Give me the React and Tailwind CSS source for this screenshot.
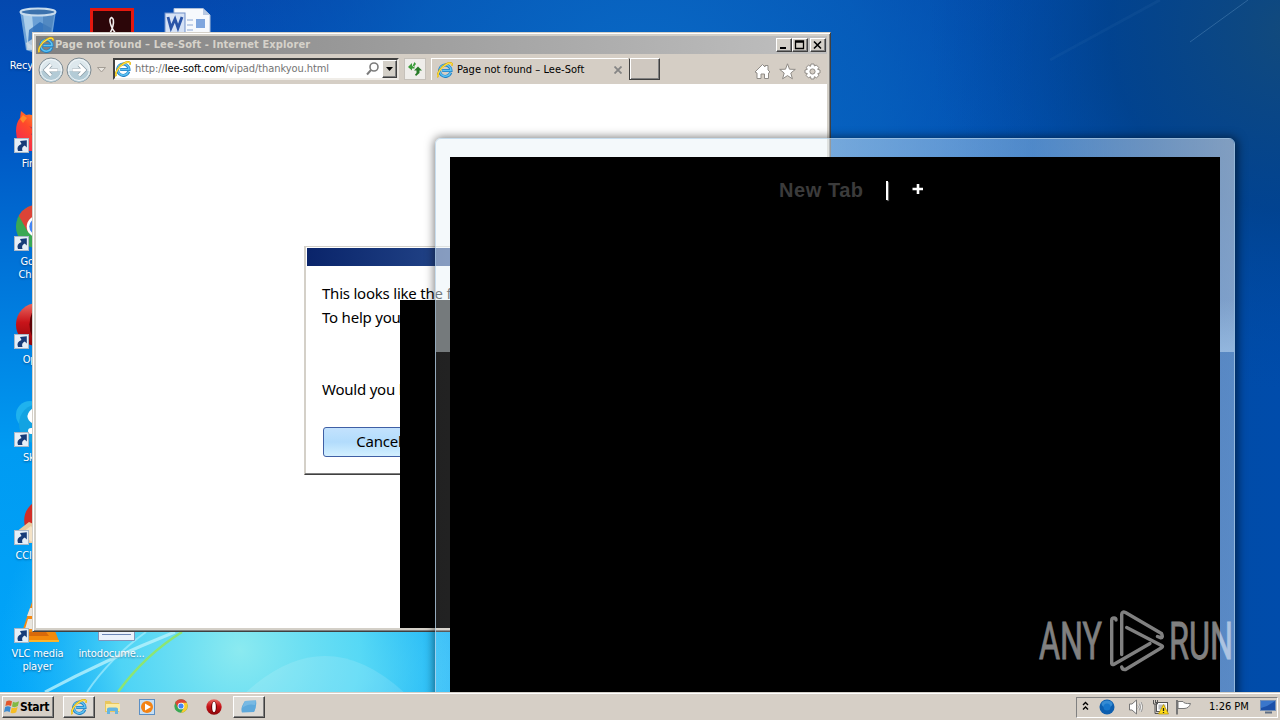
import React from 'react';
import clsx from 'clsx';

const UI = 'font-[Tahoma,"DejaVu_Sans_Condensed","DejaVu_Sans",sans-serif]';

function IEIcon({ size = 16 }) {
  return (
    <svg width={size} height={size} viewBox="0 0 16 16" className="shrink-0">
      <path d="M13.7 10.6A5.7 5.7 0 1 1 14 8.6H5.2" fill="none" stroke="#1f7fc4" strokeWidth="3" />
      <path d="M13.6 10.6A5.7 5.7 0 1 1 14 8.6H5.4" fill="none" stroke="#5ec3f2" strokeWidth="1.5" />
      <path d="M1.2 15.2C-.6 12 3.6 5.2 9.2 2.2 12.6.4 15.6.4 15 3.6" fill="none" stroke="#d9a800" strokeWidth="1.9" />
      <path d="M1.2 15C-.4 12 3.8 5.4 9.2 2.4 12.6.6 15.4.6 15 3.4" fill="none" stroke="#ffe14a" strokeWidth="1.1" />
    </svg>
  );
}

function ChromeIcon({ size }) {
  return (
    <svg width={size} height={size} viewBox="0 0 48 48">
      <circle cx="24" cy="24" r="23" fill="#3aa853" />
      <path d="M4 12.5A23 23 0 0 1 44 12.5L34 19 14 30Z" fill="#dc4437" />
      <path d="M24 13H44A23 23 0 0 1 24 47L34 30Z" fill="#fbcb2d" />
      <circle cx="24" cy="24" r="11.5" fill="#fff" />
      <circle cx="24" cy="24" r="8.8" fill="#4285f4" />
    </svg>
  );
}

function OperaIcon({ size }) {
  return (
    <svg width={size} height={size} viewBox="0 0 48 48">
      <defs>
        <linearGradient id="opera" x1="0" y1="0" x2="0" y2="1">
          <stop offset="0" stopColor="#e96a62" />
          <stop offset=".45" stopColor="#c8141a" />
          <stop offset="1" stopColor="#8d0509" />
        </linearGradient>
      </defs>
      <ellipse cx="24" cy="24" rx="23" ry="23" fill="url(#opera)" />
      <ellipse cx="24" cy="24" rx="8.5" ry="17" fill="#5d0205" />
      <ellipse cx="24" cy="24" rx="5.5" ry="15.5" fill="#fff" />
    </svg>
  );
}

function BinIcon() {
  return (
    <svg width="48" height="48" viewBox="0 0 48 48">
      <path d="M6 5 12 44Q24 49 36 44L42 5Z" fill="#86b5de" fillOpacity=".8" />
      <path d="M9 8 14 42 21 44 18 8Z" fill="#bcd9ef" fillOpacity=".8" />
      <path d="M15 24 26 16 37 22 35 38 22 42 14 37Z" fill="#2a6cb8" fillOpacity=".8" />
      <path d="M29 9H40L35 42H29Z" fill="#477fb9" fillOpacity=".7" />
      <path d="M12 37 20 32 26 44 13 44Z" fill="#cfdbe4" fillOpacity=".8" />
      <ellipse cx="24" cy="6" rx="17.5" ry="3.5" fill="#3c72ad" stroke="#c8dced" strokeWidth="2" />
    </svg>
  );
}

function FirefoxIcon() {
  return (
    <svg width="48" height="48" viewBox="0 0 48 48">
      <defs>
        <linearGradient id="fox" x1="0" y1="1" x2="1" y2="0">
          <stop offset="0" stopColor="#f01d5d" />
          <stop offset=".45" stopColor="#ff4a2a" />
          <stop offset="1" stopColor="#ffc928" />
        </linearGradient>
      </defs>
      <path d="M7 7 12 11Q15 10 18 11L21 8 46 18V38L30 47H12Q2 40 2 27 2 19 6 14Z" fill="url(#fox)" />
      <path d="M15 22Q20 26 26 22L30 30Q22 36 17 30L22 28Z" fill="#7d2b66" />
      <path d="M6 15 9 11 13 14 9 19Z" fill="#ff8b2a" />
    </svg>
  );
}

function SkypeIcon() {
  return (
    <svg width="48" height="48" viewBox="0 0 48 48">
      <circle cx="16" cy="17" r="14" fill="#1fb2ee" />
      <circle cx="25" cy="26" r="20" fill="#13a3e2" />
      <path d="M34 15Q23 9 18 15T25 25 32 31 17 33" fill="none" stroke="#fff" strokeWidth="6" strokeLinecap="round" />
    </svg>
  );
}

function CCleanerIcon() {
  return (
    <svg width="48" height="48" viewBox="0 0 48 48">
      <path d="M42 11A17 17 0 1 0 42 38" fill="none" stroke="#d12d27" strokeWidth="9" />
      <circle cx="29" cy="24" r="10" fill="#78b7dc" />
      <path d="M2 36 15 26 24 30 33 47H7Z" fill="#e9c99d" />
      <path d="M9 36 17 30 23 40 17 46Z" fill="#f4e2c6" />
    </svg>
  );
}

function VlcIcon() {
  return (
    <svg width="48" height="48" viewBox="0 0 48 48">
      <path d="M20 2H28L40 38H8Z" fill="#f58a12" />
      <path d="M16 14H32L34 22H13ZM14 25H37L39 35H11Z" fill="#e9e6df" />
      <path d="M6 37H41L45 47H2Z" fill="#f38a0b" />
      <path d="M2 46H45V48H2Z" fill="#ffb429" />
      <path d="M15 38H32L35 42H12Z" fill="#d8690a" />
    </svg>
  );
}

function AdobeIcon() {
  return (
    <svg width="48" height="48" viewBox="0 0 48 48">
      <rect x="2" y="2" width="44" height="44" fill="#e4180f" />
      <rect x="5" y="5" width="38" height="38" fill="#2c0609" />
      <path d="M17 33C26 25 27 13 23.500 11.500 20 13 23 25 32 31" fill="none" stroke="#f2eeee" strokeWidth="1.6" />
    </svg>
  );
}

function WordIcon() {
  return (
    <svg width="48" height="48" viewBox="0 0 48 48">
      <path d="M11 2.500H40L47 9V47H11Z" fill="#f6f9fd" stroke="#aebfd8" />
      <path d="M40 2.500V9H47Z" fill="#b7c8e2" />
      <path d="M24 14H30M24 19H30M24 24H30" stroke="#8da8d4" />
      <rect x="33" y="13" width="9" height="9" fill="#7fa6de" />
      <rect x="2" y="7" width="20" height="20" fill="#d6e2f5" stroke="#6f8fc9" />
      <path d="M5 11 8 22 12 13 15 22 19 11" fill="none" stroke="#2b55a8" strokeWidth="2.800" />
    </svg>
  );
}

function TextDocIcon() {
  return (
    <svg width="48" height="48" viewBox="0 0 48 48">
      <path d="M10.500 2H46.500V46.500H10.500Z" fill="#eaf1fb" stroke="#7f95bb" />
      <path d="M14 40.500H43" stroke="#6b86b6" />
    </svg>
  );
}

function ShortcutArrow() {
  return (
    <svg width="15" height="15" viewBox="0 0 15 15" className="absolute -bottom-px left-0">
      <rect x=".5" y=".5" width="14" height="14" fill="#e6eff7" stroke="#a9b8c8" />
      <path d="M4 13Q2 8 7.500 6L6 3 12.800 2.200 12.800 9.500 10.800 7.500Q7 9 8.500 13Z" fill="#173c78" />
    </svg>
  );
}

const LEFT_ICONS = [
  { label: ['Recycle Bin'], Icon: BinIcon },
  { label: ['Firefox'], Icon: FirefoxIcon, shortcut: true },
  { label: ['Google', 'Chrome'], Icon: ChromeIcon, shortcut: true },
  { label: ['Opera'], Icon: OperaIcon, shortcut: true },
  { label: ['Skype'], Icon: SkypeIcon, shortcut: true },
  { label: ['CCleaner'], Icon: CCleanerIcon, shortcut: true },
  { label: ['VLC media', 'player'], Icon: VlcIcon, shortcut: true },
];

function DesktopIcon({ label, Icon, shortcut }) {
  return (
    <div className="flex h-[98px] w-[75px] shrink-0 flex-col items-center">
      <div className="relative flex h-12 w-12 items-center justify-center">
        <Icon size={45} />
        {shortcut && <ShortcutArrow />}
      </div>
      <div className="mt-[5px] text-center text-[11px] leading-[13px] tracking-[-0.15px] whitespace-nowrap text-white [text-shadow:0_1px_2px_rgba(0,20,60,.5)]">
        {label.map((line) => <div key={line}>{line}</div>)}
      </div>
    </div>
  );
}

function Wallpaper() {
  return (
    <svg width="1280" height="692" viewBox="0 0 1280 692" className="absolute inset-0">
      <defs>
        <linearGradient id="sky" x1="0" y1="0" x2="0" y2="1">
          <stop offset="0" stopColor="#0448ae" />
          <stop offset=".2" stopColor="#0058c4" />
          <stop offset=".45" stopColor="#007ddf" />
          <stop offset=".65" stopColor="#009bf2" />
          <stop offset="1" stopColor="#02a6fa" />
        </linearGradient>
        <linearGradient id="right" x1="0" y1="0" x2="1" y2="0">
          <stop offset=".55" stopColor="#0051b2" stopOpacity="0" />
          <stop offset=".9" stopColor="#004ba4" />
          <stop offset="1" stopColor="#004cab" />
        </linearGradient>
        <radialGradient id="top" gradientUnits="userSpaceOnUse" cx="640" cy="120" r="480">
          <stop offset="0" stopColor="#0a6cc8" />
          <stop offset=".5" stopColor="#0761bd" stopOpacity=".75" />
          <stop offset="1" stopColor="#0450b0" stopOpacity="0" />
        </radialGradient>
        <radialGradient id="corner" gradientUnits="userSpaceOnUse" cx="1290" cy="30" r="360">
          <stop offset="0" stopColor="#124a7c" />
          <stop offset=".5" stopColor="#024088" stopOpacity=".75" />
          <stop offset="1" stopColor="#0048a0" stopOpacity="0" />
        </radialGradient>
        <radialGradient id="glow" gradientUnits="userSpaceOnUse" cx="240" cy="650" r="240">
          <stop offset="0" stopColor="#8beaf0" />
          <stop offset=".5" stopColor="#5cdcf5" stopOpacity=".85" />
          <stop offset="1" stopColor="#25baf7" stopOpacity="0" />
        </radialGradient>
        <radialGradient id="glow2" gradientUnits="userSpaceOnUse" cx="370" cy="680" r="180">
          <stop offset="0" stopColor="#46cdf6" />
          <stop offset="1" stopColor="#30c0f5" stopOpacity="0" />
        </radialGradient>
      </defs>
      <rect width="1280" height="692" fill="url(#sky)" />
      <rect width="1280" height="692" fill="url(#right)" />
      <rect width="1280" height="692" fill="url(#top)" />
      <rect width="1280" height="692" fill="url(#corner)" />
      <rect width="600" height="692" fill="url(#glow2)" />
      <rect width="600" height="692" fill="url(#glow)" />
      <path d="M238 700Q325 612 412 700Z" fill="#fff" fillOpacity=".13" />
      <path d="M45 692Q105 660 175 632" fill="none" stroke="#b9f2fd" strokeOpacity=".8" strokeWidth="3" />
      <path d="M87 692Q110 658 146 632" fill="none" stroke="#a4ecfd" strokeOpacity=".7" strokeWidth="2" />
      <path d="M118 692Q145 655 182 632" fill="none" stroke="#8de572" strokeWidth="2.500" />
      <path d="M1190 42 1248 0" stroke="#4f86b8" strokeOpacity=".5" />
      <path d="M1050 60 1160 0" stroke="#3f78b8" strokeOpacity=".12" strokeWidth="3" />
    </svg>
  );
}

function CaptionButton({ children, className }) {
  return (
    <div className={clsx('flex h-[14px] w-4 items-center justify-center border border-t-white border-l-white border-r-[#404040] border-b-[#404040] bg-[#d4d0c8] shadow-[inset_-1px_-1px_0_#808080]', className)}>
      <svg width="12" height="10" viewBox="0 0 12 10">{children}</svg>
    </div>
  );
}

function TitleBar() {
  return (
    <div className="flex h-[18px] items-center bg-linear-to-r from-[#808080] to-[#c0c0c0] pr-px pl-[2px]">
      <IEIcon size={16} />
      <span className="ml-px flex-1 text-[11px] font-bold tracking-[0.1px] whitespace-nowrap text-[#d6d2ca]">Page not found – Lee-Soft - Internet Explorer</span>
      <CaptionButton><path d="M2 8H8" stroke="#000" strokeWidth="2" /></CaptionButton>
      <CaptionButton><path d="M1.500 1H9.500V8.500H1.500ZM1.500 2H9.500" fill="none" stroke="#000" strokeWidth="1.300" /></CaptionButton>
      <CaptionButton className="ml-[2px]"><path d="M2 1.500 9 8.500M9 1.500 2 8.500" stroke="#000" strokeWidth="1.600" /></CaptionButton>
    </div>
  );
}

function NavButton({ flip }) {
  return (
    <svg width="28" height="26" viewBox="0 0 28 26" className={clsx('shrink-0', flip && '-scale-x-100')}>
      <circle cx="14" cy="13" r="12" fill="#dde8ed" stroke="#7f8b92" />
      <path d="M3 14A11 11 0 0 0 25 14Z" fill="#b3cbd6" />
      <circle cx="14" cy="13" r="10.500" fill="none" stroke="#f2f7f9" />
      <path d="M14 7.500 8.500 13 14 18.500M9 13H20.500" fill="none" stroke="#8b9ca6" strokeWidth="4.200" />
      <path d="M14 7.500 8.500 13 14 18.500M9 13H20.500" fill="none" stroke="#fff" strokeWidth="2.800" />
    </svg>
  );
}

function Toolbar() {
  return (
    <div className="flex h-[30px] items-start bg-[#d5cec5] pt-[4px] pl-[1px] text-[11px]">
      <div className="-mt-px flex h-[26px]">
        <NavButton />
        <NavButton flip />
      </div>
      <svg width="20" height="22" viewBox="0 0 20 22" className="shrink-0">
        <path d="M4.500 9.500H12.500L8.500 14Z" fill="#e9e5df" stroke="#a39d95" />
      </svg>
      <div className="flex h-[22px] w-[286px] shrink-0 items-center border-2 border-t-[#404040] border-l-[#404040] border-r-[#e8e4de] border-b-[#f0ede8] bg-white">
        <IEIcon size={16} />
        <span className="ml-1 flex-1 pt-px tracking-[-0.08px] whitespace-nowrap text-[#747474]">
          http://<span className="text-black">lee-soft.com</span>/vipad/thankyou.html
        </span>
        <svg width="18" height="16" viewBox="0 0 18 16">
          <circle cx="10" cy="6" r="4" fill="none" stroke="#7c7c7c" strokeWidth="1.600" />
          <path d="M7 9 3 13.500" stroke="#7c7c7c" strokeWidth="2" />
        </svg>
        <div className="flex h-[18px] w-[15px] items-center justify-center border border-t-white border-l-white border-r-[#404040] border-b-[#404040] bg-[#d4d0c8] shadow-[inset_-1px_-1px_0_#808080]">
          <svg width="7" height="4"><path d="M0 0H7L3.500 4Z" /></svg>
        </div>
      </div>
      <div className="ml-[5px] flex h-[22px] w-[22px] shrink-0 items-center justify-center border border-[#c6c1ba] bg-[#efedea]">
        <svg width="16" height="16" viewBox="0 0 16 16">
          <path d="M5 2 1 6 5 9.500V7.500H7.500V5H5ZM7.500 1 9 3 6.500 6 5.500 5Z" fill="#3a9b38" />
          <path d="M11 5.500 15 9.500H12.500V12L9 15 8 13.500 9.500 12V9.500H7Z" fill="#267a27" />
        </svg>
      </div>
      <div className="ml-[5px] flex h-[22px] w-[197px] shrink-0 items-center border-t border-l border-white pt-px pl-[5px]">
        <IEIcon size={16} />
        <span className="ml-[4px] flex-1 tracking-[0.03px] whitespace-nowrap text-black">Page not found – Lee-Soft</span>
        <svg width="8" height="8" viewBox="0 0 8 8" className="mr-[6px]">
          <path d="M.5 .5 7.500 7.500M7.500 .5 .5 7.500" stroke="#858585" strokeWidth="1.800" />
        </svg>
      </div>
      <div className="ml-px h-[22px] w-[31px] shrink-0 border border-t-white border-l-[#404040] border-r-[#404040] border-b-[#404040] bg-[#cfc8c0] shadow-[inset_1px_0_0_#fff,inset_-1px_-1px_0_#808080]" />
      <div className="mt-[5px] mr-[6px] ml-auto flex gap-[8px]">
        <svg width="17" height="17" viewBox="0 0 17 17">
          <path d="M1 9 8.500 1.500 11 4V2.500H14V7L16 9 14.500 10V15.500H10.500V11H7V15.500H3V10Z" fill="#fff" stroke="#8f8b86" />
        </svg>
        <svg width="17" height="17" viewBox="0 0 17 17">
          <path d="M8.500 .8 10.500 6.200 16.300 6.400 11.800 10 13.400 15.800 8.500 12.600 3.600 15.800 5.200 10 .7 6.400 6.500 6.200Z" fill="#fff" stroke="#8f8b86" />
        </svg>
        <svg width="17" height="17" viewBox="0 0 17 17">
          <path d="M7 1H10L10.400 3 12.300 2 14.800 4.500 13.700 6.400 16 7V10L13.800 10.500 14.900 12.500 12.500 14.800 10.400 13.700 10 16H7L6.500 13.700 4.500 14.900 2.200 12.500 3.300 10.500 1 10V7L3.300 6.400 2.200 4.400 4.500 2.200 6.500 3.300Z" fill="#fff" stroke="#8f8b86" />
          <circle cx="8.500" cy="8.500" r="2.600" fill="#d5cec5" stroke="#8f8b86" />
        </svg>
      </div>
    </div>
  );
}

function FirstRunDialog() {
  return (
    <div className="absolute top-[162px] left-[268px] h-[229px] w-[420px] border border-t-[#d4d0c8] border-l-[#d4d0c8] border-r-[#404040] border-b-[#404040] bg-white p-px font-[Tahoma,'Noto_Sans',sans-serif] text-[15px] tracking-[-0.22px] text-black shadow-[inset_0_-1px_0_#808080,inset_1px_0_0_#d4d0c8]">
      <div className="ml-px h-[18px] bg-linear-to-r from-[#0a246a] to-[#5a84c4]" />
      <div className="flex flex-col pt-[15px] pl-4 leading-6 whitespace-nowrap">
        <div>This looks like the first time</div>
        <div>To help you get started</div>
        <div className="mt-12">Would you like to continue?</div>
        <div className="mt-[26px] ml-px flex h-[30px] w-[112px] items-center justify-center rounded-[3px] border border-[#3f5fa5] bg-linear-to-b from-[#c3e2fd] via-[#b2dcfc] via-50% to-[#d3f0ff] pb-[2px]">Cancel</div>
      </div>
    </div>
  );
}

function BrowserWindow() {
  return (
    <div className="absolute top-[32px] left-[32px] flex h-[600px] w-[799px] flex-col border border-t-[#d4d0c8] border-l-[#d4d0c8] border-r-[#404040] border-b-[#404040] bg-[#d4d0c8] p-[3px] shadow-[inset_1px_1px_0_#fff,inset_-1px_-1px_0_#808080]">
      <TitleBar />
      <Toolbar />
      <div className="relative flex-1 overflow-hidden bg-white">
        <FirstRunDialog />
        <div className="absolute top-[216px] right-[4px] bottom-0 left-[364px] bg-black" />
      </div>
    </div>
  );
}

// translucent Aero frame: lighter reflection in the upper part, darker tint below
function GlassWindow() {
  return (
    <div className="absolute top-[138px] left-[435px] h-[600px] w-[800px] overflow-hidden rounded-[6px] border border-[#b9d4ea]/80 shadow-[1px_1px_10px_2px_rgba(0,0,0,.5)]">
      <div className="flex h-full flex-col">
        <div className="flex h-[213px]">
          <div className="w-[395px] bg-[#eaf3f8]/50" />
          <div className="flex-1 bg-linear-to-r from-[#e4f0f8]/50 via-[#9cc4ea]/50 to-[#d4dae4]/60" />
        </div>
        <div className="flex-1 bg-linear-to-r from-white/13 to-[#dfe6f0]/40" />
      </div>
      <div className="absolute top-[160px] right-0 h-[53px] w-[14px] bg-linear-to-b from-[#a8cdf0]/0 to-[#a8cdf0]/50" />
      <div className="absolute top-[18px] right-[14px] bottom-0 left-[14px] bg-black">
        <div className="flex items-center pt-[19px] pl-[329px] font-['Liberation_Sans',Arial,sans-serif] text-[20px] leading-7 font-bold">
          <span className="w-[107px] tracking-[0.55px] whitespace-nowrap text-[#3b3b3b]">New Tab</span>
          <span className="h-[19px] w-[2px] bg-white shadow-[1px_1px_1px_#666]" />
          <svg width="12" height="12" viewBox="0 0 12 12" className="ml-[24px]">
            <path d="M6 0V10M.5 5H11" stroke="#fff" strokeWidth="2.600" />
          </svg>
        </div>
      </div>
    </div>
  );
}

function Watermark() {
  return (
    <svg width="220" height="70" viewBox="0 0 220 70" className="absolute top-[606px] left-[1035px] overflow-visible opacity-50">
      <g fill="#fff" stroke="#fff" strokeWidth=".8" fontFamily="Roboto, sans-serif" fontSize="52">
        <text x="4" y="53" textLength="63" lengthAdjust="spacingAndGlyphs">ANY</text>
        <text x="134" y="53" textLength="64" lengthAdjust="spacingAndGlyphs">RUN</text>
      </g>
      <g fill="none" stroke="#fff" strokeWidth="3.400" strokeLinejoin="round" strokeLinecap="round">
        <path d="M81 14Q81 12 79 12 76.700 12 76.700 14.500V57.500Q77 59.500 79.500 58L115 37.500" />
        <path d="M86.700 48.500V8.500Q87 5 90.500 6.500L126.500 27.500Q128.500 32 125.500 31.700L122.500 30.500" />
        <path d="M91.700 21.500 126.500 39.500Q128.500 40.500 126.500 41.700L90.500 63.500Q87.500 64 86.700 61" />
        <path d="M91.700 21.500V51" strokeWidth=".01" />
      </g>
    </svg>
  );
}

function TaskButton({ children, className }) {
  return (
    <div className={clsx('flex h-[22px] shrink-0 items-center justify-center border border-t-white border-l-white border-r-[#404040] border-b-[#404040] shadow-[inset_-1px_-1px_0_#808080]', className)}>
      {children}
    </div>
  );
}

function Tray() {
  return (
    <div className="mr-[2px] ml-auto flex h-[21px] w-[202px] items-center border border-t-[#808080] border-l-[#808080] border-r-white border-b-white text-[11px] text-black">
      <svg width="7" height="10" viewBox="0 0 7 10" className="mb-[3px] ml-[5px]">
        <path d="M1 4 3.500 1.500 6 4M1 8.500 3.500 6 6 8.500" fill="none" stroke="#000" strokeWidth="1.400" />
      </svg>
      <svg width="16" height="16" viewBox="0 0 16 16" className="ml-[10px]">
        <circle cx="8" cy="8" r="7.500" fill="#0d5eae" />
        <ellipse cx="8" cy="5" rx="5.500" ry="3.500" fill="#358bd3" />
        <circle cx="8" cy="8" r="3.500" fill="#1776cb" />
      </svg>
      <svg width="17" height="16" viewBox="0 0 17 16" className="ml-[13px]">
        <path d="M1.500 5H4L8.500 1V15L4 11H1.500Z" fill="#fff" stroke="#777" />
        <path d="M10.500 5.500Q12 8 10.500 10.500M12.500 3.500Q15 8 12.500 12.500" fill="none" stroke="#888" strokeWidth="2.200" />
        <path d="M10.500 5.500Q12 8 10.500 10.500M12.500 3.500Q15 8 12.500 12.500" fill="none" stroke="#fff" />
      </svg>
      <svg width="17" height="16" viewBox="0 0 17 16" className="ml-[7px]">
        <rect x="4.500" y="3.500" width="11" height="9" fill="#fff" stroke="#555" />
        <rect x="6.500" y="5.500" width="7" height="5" fill="#b9bcc0" />
        <path d="M1.500 1V5H3V14.500H8M5.500 1V5H3M3.500 1V4" fill="none" stroke="#555" />
        <path d="M11.500 5.500 16.500 15H6.500Z" fill="#ffdc16" stroke="#b08e00" strokeWidth=".7" />
        <path d="M11.500 9V12M11.500 13V14" stroke="#222" strokeWidth="1.300" />
      </svg>
      <svg width="17" height="16" viewBox="0 0 17 16" className="ml-[6px]">
        <path d="M2 1V15.500" stroke="#777" strokeWidth="2" />
        <path d="M3 2.500H8Q9 5 15.500 4.500 14 9.500 9 9.500H3Z" fill="#fff" stroke="#777" />
      </svg>
      <span className="ml-[17px] pt-px whitespace-nowrap">1:26 PM</span>
      <svg width="16" height="14" viewBox="0 0 16 14" className="mr-[1px] ml-auto">
        <rect x=".5" y=".5" width="15" height="10" fill="#1b50a9" stroke="#7590b7" />
        <path d="M1 1H15L7 6 1 8Z" fill="#3a76cb" />
        <path d="M5 12.500H12" stroke="#5f6e84" strokeWidth="2" />
      </svg>
    </div>
  );
}

function Taskbar() {
  return (
    <div className="flex h-7 items-center border-t border-[#d4d0c8] bg-[#d6cfc6] pt-px pl-[2px] shadow-[inset_0_1px_0_#fff]">
      <TaskButton className="w-[52px] pr-[3px]">
        <svg width="16" height="16" viewBox="0 0 17 16" className="shrink-0">
          <path d="M2.500 2Q5.500 0 8.500 2L7.500 7Q4.500 5.500 1.500 7Z" fill="#e2562b" />
          <path d="M9.500 2.500Q12.500 4 16 2L14.700 7Q11.500 9 8.500 7.500Z" fill="#82b944" />
          <path d="M1.200 8Q4 6.500 7.200 8L6 13.500Q3.500 11.500 0 13.500Z" fill="#3b8ad0" />
          <path d="M8.200 8.500Q11 10 14.500 8L13 13.500Q10 15.500 7 14Z" fill="#f6bd24" />
        </svg>
        <span className="text-[12px] font-bold tracking-[-0.35px] text-black">Start</span>
      </TaskButton>
      <TaskButton className="ml-[9px] w-8 bg-[#dedad4]"><IEIcon size={16} /></TaskButton>
      <div className="flex w-[137px] justify-around pr-px">
        <svg width="17" height="16" viewBox="0 0 17 16">
          <path d="M1 2H6L8 4H15V13H1Z" fill="#e8c65d" />
          <path d="M2 5H16V12H2Z" fill="#fbeaa1" />
          <path d="M3 15V10Q3 8.500 5 8.500H12Q14 8.500 14 10V15H11V12H6V15Z" fill="#66b5e0" />
        </svg>
        <svg width="16" height="16" viewBox="0 0 16 16">
          <rect x=".5" y=".5" width="15" height="15" fill="#c6dff4" stroke="#5b8fc4" />
          <circle cx="8" cy="8" r="6" fill="#f38314" />
          <path d="M6 4.500 12 8 6 11.500Z" fill="#fff" />
        </svg>
        <ChromeIcon size={14} />
        <OperaIcon size={16} />
      </div>
      <TaskButton className="ml-px w-8 bg-[#dedad4]">
        <svg width="18" height="14" viewBox="0 0 18 14">
          <path d="M5 1 16 .5Q17 7 14 12L2 12.500Q0 8 5 1Z" fill="#5ea9dc" />
          <path d="M5 1 16 .5 15 5Q8 3 2 8Z" fill="#78b9e3" />
        </svg>
      </TaskButton>
      <Tray />
    </div>
  );
}

export default function App() {
  return (
    <div className={clsx('flex h-[720px] w-[1280px] flex-col overflow-hidden', UI)}>
      <div className="relative flex-1 overflow-hidden">
        <Wallpaper />
        <div className="relative flex pt-[6px]">
          <div className="flex flex-col">
            {LEFT_ICONS.map((item) => <DesktopIcon key={item.label[0]} {...item} />)}
          </div>
          <div className="-ml-px flex flex-col justify-between">
            <DesktopIcon label={['Acrobat']} Icon={AdobeIcon} />
            <DesktopIcon label={['intodocume...']} Icon={TextDocIcon} />
          </div>
          <DesktopIcon label={['']} Icon={WordIcon} />
        </div>
        <BrowserWindow />
        <GlassWindow />
        <Watermark />
      </div>
      <Taskbar />
    </div>
  );
}
